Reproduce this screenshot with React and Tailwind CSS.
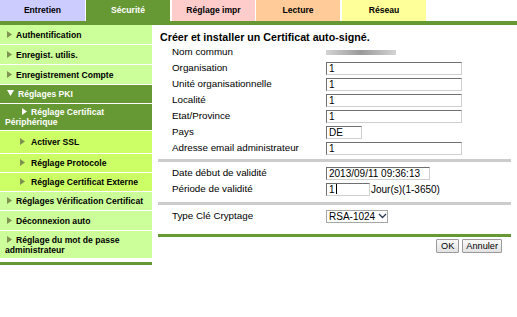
import React from "react";

// tabs across the top
const tabs = [
  { label: "Entretien", cls: "w-[85px] bg-[#ccccff] text-black" },
  { label: "Sécurité", cls: "w-[84px] ml-[1px] bg-[#669933] text-white" },
  { label: "Réglage impr", cls: "w-[83px] ml-[2px] bg-[#ffcccc] text-black" },
  { label: "Lecture", cls: "w-[84px] ml-[1px] bg-[#ffcc99] text-black" },
  { label: "Réseau", cls: "w-[84px] ml-[2px] bg-[#ffff99] text-black" },
];

const Arrow = ({ color = "#7d9450", down = false }) =>
  down ? (
    <svg width="7" height="6" viewBox="0 0 7 6" className="inline-block align-[1px]">
      <polygon points="0,0 7,0 3.5,6" fill={color} />
    </svg>
  ) : (
    <svg width="5" height="7" viewBox="0 0 5 7" className="inline-block align-[0px]">
      <polygon points="0,0 5,3.5 0,7" fill={color} />
    </svg>
  );

const SideItem = ({ children, cls, arrowCls, dark, down }) => (
  <div className={`pl-[5px] font-bold text-[8.6px] leading-[10px] ${cls}`}>
    <span className={`inline-block ${arrowCls}`}>
      <Arrow color={dark ? "#ffffff" : "#7d9450"} down={down} />
    </span>
    {children}
  </div>
);

const Field = ({ label, children }) => (
  <div className="flex items-center h-[16px] pl-[14px]">
    <div className="w-[154px] shrink-0 text-[9.8px] leading-[12px] text-black">{label}</div>
    {children}
  </div>
);

const Box = ({ w = "w-[136px]", children }) => (
  <div
    className={`${w} shrink-0 h-[13px] border border-t-[#6f6f6f] border-l-[#6f6f6f] border-r-[#cfcfcf] border-b-[#cfcfcf] bg-white pl-[2px] text-[10px] leading-[11px] text-black flex items-center whitespace-nowrap`}
  >
    {children}
  </div>
);

export default function App() {
  return (
    <div className="w-[517px] h-[317px] bg-white overflow-hidden font-['Liberation_Sans',Arial,sans-serif]">
      <div className="flex h-[21px]">
        {tabs.map((t) => (
          <div
            key={t.label}
            className={`${t.cls} flex items-center justify-center font-bold text-[8.6px]`}
          >
            {t.label}
          </div>
        ))}
      </div>
      <div className="h-[4px] bg-[#669933]" />

      <div className="flex">
        {/* left menu */}
        <aside className="w-[152px] flex flex-col">
          <div className="flex flex-col gap-px">
            <SideItem cls="h-[19px] flex items-center bg-[#ccff99] whitespace-nowrap" arrowCls="ml-[2px] mr-[4px]">
              Authentification
            </SideItem>
            <SideItem cls="h-[19px] flex items-center bg-[#ccff99] whitespace-nowrap" arrowCls="ml-[2px] mr-[4px]">
              Enregist. utilis.
            </SideItem>
            <SideItem cls="h-[19px] flex items-center bg-[#ccff99] whitespace-nowrap" arrowCls="ml-[2px] mr-[4px]">
              Enregistrement Compte
            </SideItem>
            <SideItem cls="h-[18px] flex items-center bg-[#669933] text-white whitespace-nowrap" arrowCls="ml-[2px] mr-[4px]" dark down>
              Réglages PKI
            </SideItem>
            <SideItem cls="h-[26px] pt-[3px] bg-[#669933] text-white" arrowCls="ml-[17px] mr-[4px]" dark>
              Réglage Certificat Périphérique
            </SideItem>
            <SideItem cls="h-[22px] flex items-center bg-[#ccff66] whitespace-nowrap" arrowCls="ml-[15px] mr-[6px]">
              Activer SSL
            </SideItem>
            <SideItem cls="h-[18px] flex items-center bg-[#ccff66] whitespace-nowrap" arrowCls="ml-[15px] mr-[6px]">
              Réglage Protocole
            </SideItem>
            <SideItem cls="h-[18px] flex items-center bg-[#ccff66] whitespace-nowrap" arrowCls="ml-[15px] mr-[6px]">
              Réglage Certificat Externe
            </SideItem>
            <SideItem cls="h-[18px] flex items-center bg-[#ccff99] whitespace-nowrap" arrowCls="ml-[2px] mr-[4px]">
              Réglages Vérification Certificat
            </SideItem>
            <SideItem cls="h-[19px] flex items-center bg-[#ccff99] whitespace-nowrap" arrowCls="ml-[2px] mr-[4px]">
              Déconnexion auto
            </SideItem>
            <SideItem cls="h-[27px] pt-[4px] bg-[#ccff99]" arrowCls="ml-[2px] mr-[4px]">
              Réglage du mot de passe administrateur
            </SideItem>
          </div>
          <div className="mt-[4px] h-[3px] bg-[#669933]" />
        </aside>

        {/* form */}
        <main className="w-[353px] ml-[6px] pt-[5px]">
          <div className="h-[14px] pl-[2px] flex items-center font-bold text-[10.7px] text-black">
            Créer et installer un Certificat auto-signé.
          </div>
          <Field label="Nom commun">
            <div className="w-[70px] h-[5px] bg-gradient-to-r from-[#d4d4d4] via-[#9a9a9a] to-[#d4d4d4] blur-[0.6px]" />
          </Field>
          <Field label="Organisation">
            <Box>1</Box>
          </Field>
          <Field label="Unité organisationnelle">
            <Box>1</Box>
          </Field>
          <Field label="Localité">
            <Box>1</Box>
          </Field>
          <Field label="Etat/Province">
            <Box>1</Box>
          </Field>
          <Field label="Pays">
            <Box w="w-[36px]">DE</Box>
          </Field>
          <Field label="Adresse email administrateur">
            <Box>1</Box>
          </Field>

          <div className="mt-[3px] h-[3px] bg-[#cccccc]" />

          <div className="mt-[3px]">
            <Field label="Date début de validité">
              <Box w="w-[104px]">2013/09/11 09:36:13</Box>
            </Field>
            <Field label="Période de validité">
              <Box w="w-[44px]">
                1<span className="inline-block w-px h-[10px] bg-black ml-[1px]" />
              </Box>
              <span className="text-[10px] text-black ml-[1px] whitespace-nowrap">Jour(s)(1-3650)</span>
            </Field>
          </div>

          <div className="mt-[5px] h-[3px] bg-[#cccccc]" />

          <div className="mt-[3px]">
            <Field label="Type Clé Cryptage">
              <div className="w-[62px] shrink-0 h-[13px] border border-[#a6a6a6] bg-white pl-[2px] flex items-center text-[10px] text-black whitespace-nowrap">
                RSA-1024
                <svg width="9" height="6" viewBox="0 0 9 6" className="ml-[3px] shrink-0">
                  <polyline points="1,1 4.5,4.5 8,1" fill="none" stroke="#2b3a55" strokeWidth="1.3" />
                </svg>
              </div>
            </Field>
          </div>

          <div className="mt-[10px] h-[3px] bg-[#669933]" />

          <div className="mt-[2px] flex justify-end gap-[3px] pr-[9px]">
            <button className="h-[14px] px-[4px] border border-[#9a9a9a] rounded-[1px] bg-gradient-to-b from-[#fafafa] to-[#e2e2e2] text-[9.2px] leading-[12px] text-black">
              OK
            </button>
            <button className="h-[14px] px-[3px] border border-[#9a9a9a] rounded-[1px] bg-gradient-to-b from-[#fafafa] to-[#e2e2e2] text-[9.2px] leading-[12px] text-black">
              Annuler
            </button>
          </div>
        </main>
      </div>
    </div>
  );
}
